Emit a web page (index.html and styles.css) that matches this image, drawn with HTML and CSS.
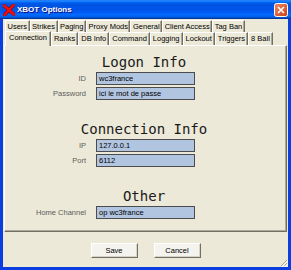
FILE: index.html
```html
<!DOCTYPE html>
<html lang="en">
<head>
  <meta charset="UTF-8" />
  <title>XBOT Options</title>
  <link rel="stylesheet" href="styles.css">
</head>
<body>
  <div class="window">
    <div class="titlebar">
      <svg class="app-icon" width="12" height="12" viewBox="0 0 12 12">
        <path d="M1 1.5 L11 10.5" stroke="#8a0000" stroke-width="3.4" stroke-linecap="round"/>
        <path d="M10.5 1 L1.5 11" stroke="#8a0000" stroke-width="3.4" stroke-linecap="round"/>
        <path d="M1 1.5 L11 10.5" stroke="#ee1010" stroke-width="2.4" stroke-linecap="round"/>
        <path d="M10.5 1 L1.5 11" stroke="#ee1010" stroke-width="2.4" stroke-linecap="round"/>
      </svg>
      <span class="title">XBOT Options</span>
      <div class="close">
        <svg width="14" height="14" viewBox="0 0 14 14">
          <defs>
            <linearGradient id="closeGrad" x1="0" y1="0" x2="1" y2="1">
              <stop offset="0" stop-color="#f08a62"/>
              <stop offset="1" stop-color="#c9401b"/>
            </linearGradient>
          </defs>
          <rect x="0.5" y="0.5" width="13" height="13" rx="2" fill="url(#closeGrad)" stroke="#fff"/>
          <path d="M4 4 L10 10 M10 4 L4 10" stroke="#fff" stroke-width="1.6"/>
        </svg>
      </div>
    </div>

    <div class="client">
      <div class="tabs">
        <div class="tab-row back">
          <div class="tab">Users</div>
          <div class="tab">Strikes</div>
          <div class="tab">Paging</div>
          <div class="tab">Proxy Mods</div>
          <div class="tab">General</div>
          <div class="tab">Client Access</div>
          <div class="tab">Tag Ban</div>
        </div>
        <div class="tab-row front">
          <div class="tab active">Connection</div>
          <div class="tab">Ranks</div>
          <div class="tab">DB Info</div>
          <div class="tab">Command</div>
          <div class="tab">Logging</div>
          <div class="tab">Lockout</div>
          <div class="tab">Triggers</div>
          <div class="tab">8 Ball</div>
        </div>
      </div>

      <div class="panel">
        <h2>Logon Info</h2>
        <div class="field"><label>ID</label><span class="input">wc3france</span></div>
        <div class="field"><label>Password</label><span class="input">ici le mot de passe</span></div>

        <h2 class="section">Connection Info</h2>
        <div class="field"><label>IP</label><span class="input">127.0.0.1</span></div>
        <div class="field"><label>Port</label><span class="input">6112</span></div>

        <h2 class="section">Other</h2>
        <div class="field"><label>Home Channel</label><span class="input">op wc3france</span></div>
      </div>

      <div class="buttons">
        <button class="btn">Save</button>
        <button class="btn">Cancel</button>
      </div>

      <svg class="grip" width="8" height="8" viewBox="0 0 8 8">
        <path d="M7 1 L1 7 M7 4 L4 7" stroke="#aca899" stroke-width="1"/>
        <path d="M8 2 L2 8 M8 5 L5 8" stroke="#fff" stroke-width="1"/>
      </svg>
    </div>
  </div>
</body>
</html>
```

FILE: styles.css
```css
body {
  margin: 0;
  background: #fff;
  font-family: "Liberation Sans", Arial, sans-serif;
  font-size: 7.5px;
  color: #000;
}

.window {
  width: 291px;
  height: 270px;
  display: flex;
  flex-direction: column;
  background: #ece9d8;
}

/* title bar */
.titlebar {
  height: 19px;
  flex: none;
  display: flex;
  align-items: center;
  padding: 0 3px 0 3px;
  background: linear-gradient(to bottom, #0058ee 0%, #3593ff 4%, #288eff 6%, #127dff 8%, #036ffc 10%, #0262ee 14%, #0057e5 20%, #0054e3 24%, #0055eb 56%, #005bf5 66%, #026afe 76%, #0062ef 86%, #0052d6 92%, #0040ab 94%, #003092 100%);
}

.app-icon {
  flex: none;
  margin-top: 1px;
}

.title {
  margin-left: 2px;
  color: #fff;
  font-weight: bold;
  font-size: 8px;
  text-shadow: 1px 1px #0f1089;
}

.close {
  margin-left: auto;
  width: 14px;
  height: 14px;
}

.close svg {
  display: block;
}

/* client area */
.client {
  flex: 1;
  position: relative;
  display: flex;
  flex-direction: column;
  padding: 1px 1px 0;
  border: 3px solid #0b3ee0;
  border-top: 0;
}

.tabs {
  padding-left: 1px;
}

.tab-row {
  display: flex;
}

.tab-row.back {
  height: 12px;
}

.tab-row.front {
  height: 13px;
}

.tab {
  padding: 0 2px;
  line-height: 11px;
  border-top: 1px solid #fff;
  border-left: 1px solid #fff;
  border-right: 1px solid #716f64;
  box-shadow: inset -1px 0 #aca899;
  white-space: nowrap;
}

.tab-row.back .tab {
  padding: 0 1.5px;
}

.tab.active {
  position: relative;
  z-index: 1;
  margin-top: -1px;
  margin-bottom: -1px;
  padding: 0 3px;
  line-height: 12px;
  background: #ece9d8;
}

/* tab page */
.panel {
  height: 187px;
  box-sizing: border-box;
  padding-top: 9px;
  border: 1px solid;
  border-color: #fff #716f64 #716f64 #fff;
  box-shadow: inset -1px -1px #aca899;
}

.panel h2 {
  margin: 0 0 3px;
  padding-right: 3px;
  font-family: "DejaVu Sans Mono", "Liberation Mono", monospace;
  font-weight: normal;
  font-size: 14px;
  line-height: 14px;
  text-align: center;
  color: #1a1a1a;
}

.panel h2.section {
  margin-top: 22px;
}

.field {
  display: grid;
  grid-template-columns: 81px 99px;
  column-gap: 10px;
  align-items: center;
  margin-bottom: 2px;
}

.field label {
  text-align: right;
  color: #5c5c5c;
}

.input {
  height: 13px;
  box-sizing: border-box;
  padding-left: 2px;
  line-height: 11px;
  background: #b2c5e0;
  border: 1px solid #4c4c4c;
  color: #000;
}

/* dialog buttons */
.buttons {
  display: flex;
  justify-content: center;
  gap: 16px;
  padding-top: 11px;
}

.btn {
  width: 47px;
  height: 15px;
  padding: 0;
  font-family: inherit;
  font-size: 7.5px;
  color: #000;
  background: #f4f3ee;
  border: 1px solid;
  border-color: #fff #716f64 #716f64 #fff;
  box-shadow: inset -1px -1px #d6d3c8;
}

.grip {
  position: absolute;
  right: 0;
  bottom: 0;
}
```
